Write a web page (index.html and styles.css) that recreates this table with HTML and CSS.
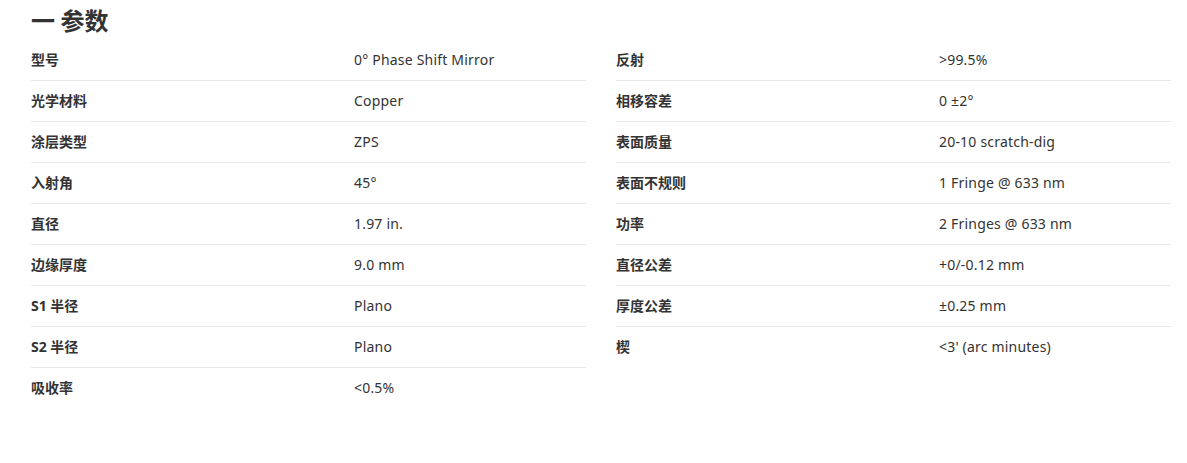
FILE: index.html
```html
<!DOCTYPE html>
<html lang="zh">
<head>
<meta charset="utf-8">
<title>参数</title>
<link rel="stylesheet" href="styles.css">
</head>
<body>
<section class="specs">
  <h2 class="specs-title">一 参数</h2>
  <div class="specs-grid">
    <div class="spec-col">
      <div class="spec-row"><div class="spec-label">型号</div><div class="spec-value">0° Phase Shift Mirror</div></div>
      <div class="spec-row"><div class="spec-label">光学材料</div><div class="spec-value">Copper</div></div>
      <div class="spec-row"><div class="spec-label">涂层类型</div><div class="spec-value">ZPS</div></div>
      <div class="spec-row"><div class="spec-label">入射角</div><div class="spec-value">45°</div></div>
      <div class="spec-row"><div class="spec-label">直径</div><div class="spec-value">1.97 in.</div></div>
      <div class="spec-row"><div class="spec-label">边缘厚度</div><div class="spec-value">9.0 mm</div></div>
      <div class="spec-row"><div class="spec-label">S1 半径</div><div class="spec-value">Plano</div></div>
      <div class="spec-row"><div class="spec-label">S2 半径</div><div class="spec-value">Plano</div></div>
      <div class="spec-row"><div class="spec-label">吸收率</div><div class="spec-value">&lt;0.5%</div></div>
    </div>
    <div class="spec-col">
      <div class="spec-row"><div class="spec-label">反射</div><div class="spec-value">&gt;99.5%</div></div>
      <div class="spec-row"><div class="spec-label">相移容差</div><div class="spec-value">0 ±2°</div></div>
      <div class="spec-row"><div class="spec-label">表面质量</div><div class="spec-value">20-10 scratch-dig</div></div>
      <div class="spec-row"><div class="spec-label">表面不规则</div><div class="spec-value">1 Fringe @ 633 nm</div></div>
      <div class="spec-row"><div class="spec-label">功率</div><div class="spec-value">2 Fringes @ 633 nm</div></div>
      <div class="spec-row"><div class="spec-label">直径公差</div><div class="spec-value">+0/-0.12 mm</div></div>
      <div class="spec-row"><div class="spec-label">厚度公差</div><div class="spec-value">±0.25 mm</div></div>
      <div class="spec-row"><div class="spec-label">楔</div><div class="spec-value">&lt;3' (arc minutes)</div></div>
    </div>
  </div>
</section>
</body>
</html>
```
FILE: styles.css
```css
html, body {
  margin: 0;
  padding: 0;
  background: #ffffff;
}

body {
  font-family: "Noto Sans", "Noto Sans CJK SC", sans-serif;
  color: #333333;
  font-size: 14px;
}

.specs {
  width: 1140px;
  padding-left: 31px;
}

.specs-title {
  margin: 0;
  height: 39px;
  line-height: 39px;
  font-size: 24px;
  font-weight: 700;
  color: #333333;
  font-family: "Noto Sans CJK SC", sans-serif;
}

.specs-grid {
  display: grid;
  grid-template-columns: 555px 555px;
  column-gap: 30px;
  align-items: start;
}

.spec-col {
  display: flex;
  flex-direction: column;
}

.spec-row {
  display: flex;
  align-items: center;
  height: 40px;
  line-height: 20px;
  border-bottom: 1px solid #e8e8e8;
}

.spec-row:first-child {
  height: 41px;
}

.spec-row:last-child {
  border-bottom: none;
}

.spec-label {
  width: 323px;
  flex: none;
  font-weight: 700;
}

.spec-value {
  flex: 1;
  letter-spacing: 0.2px;
}
```
